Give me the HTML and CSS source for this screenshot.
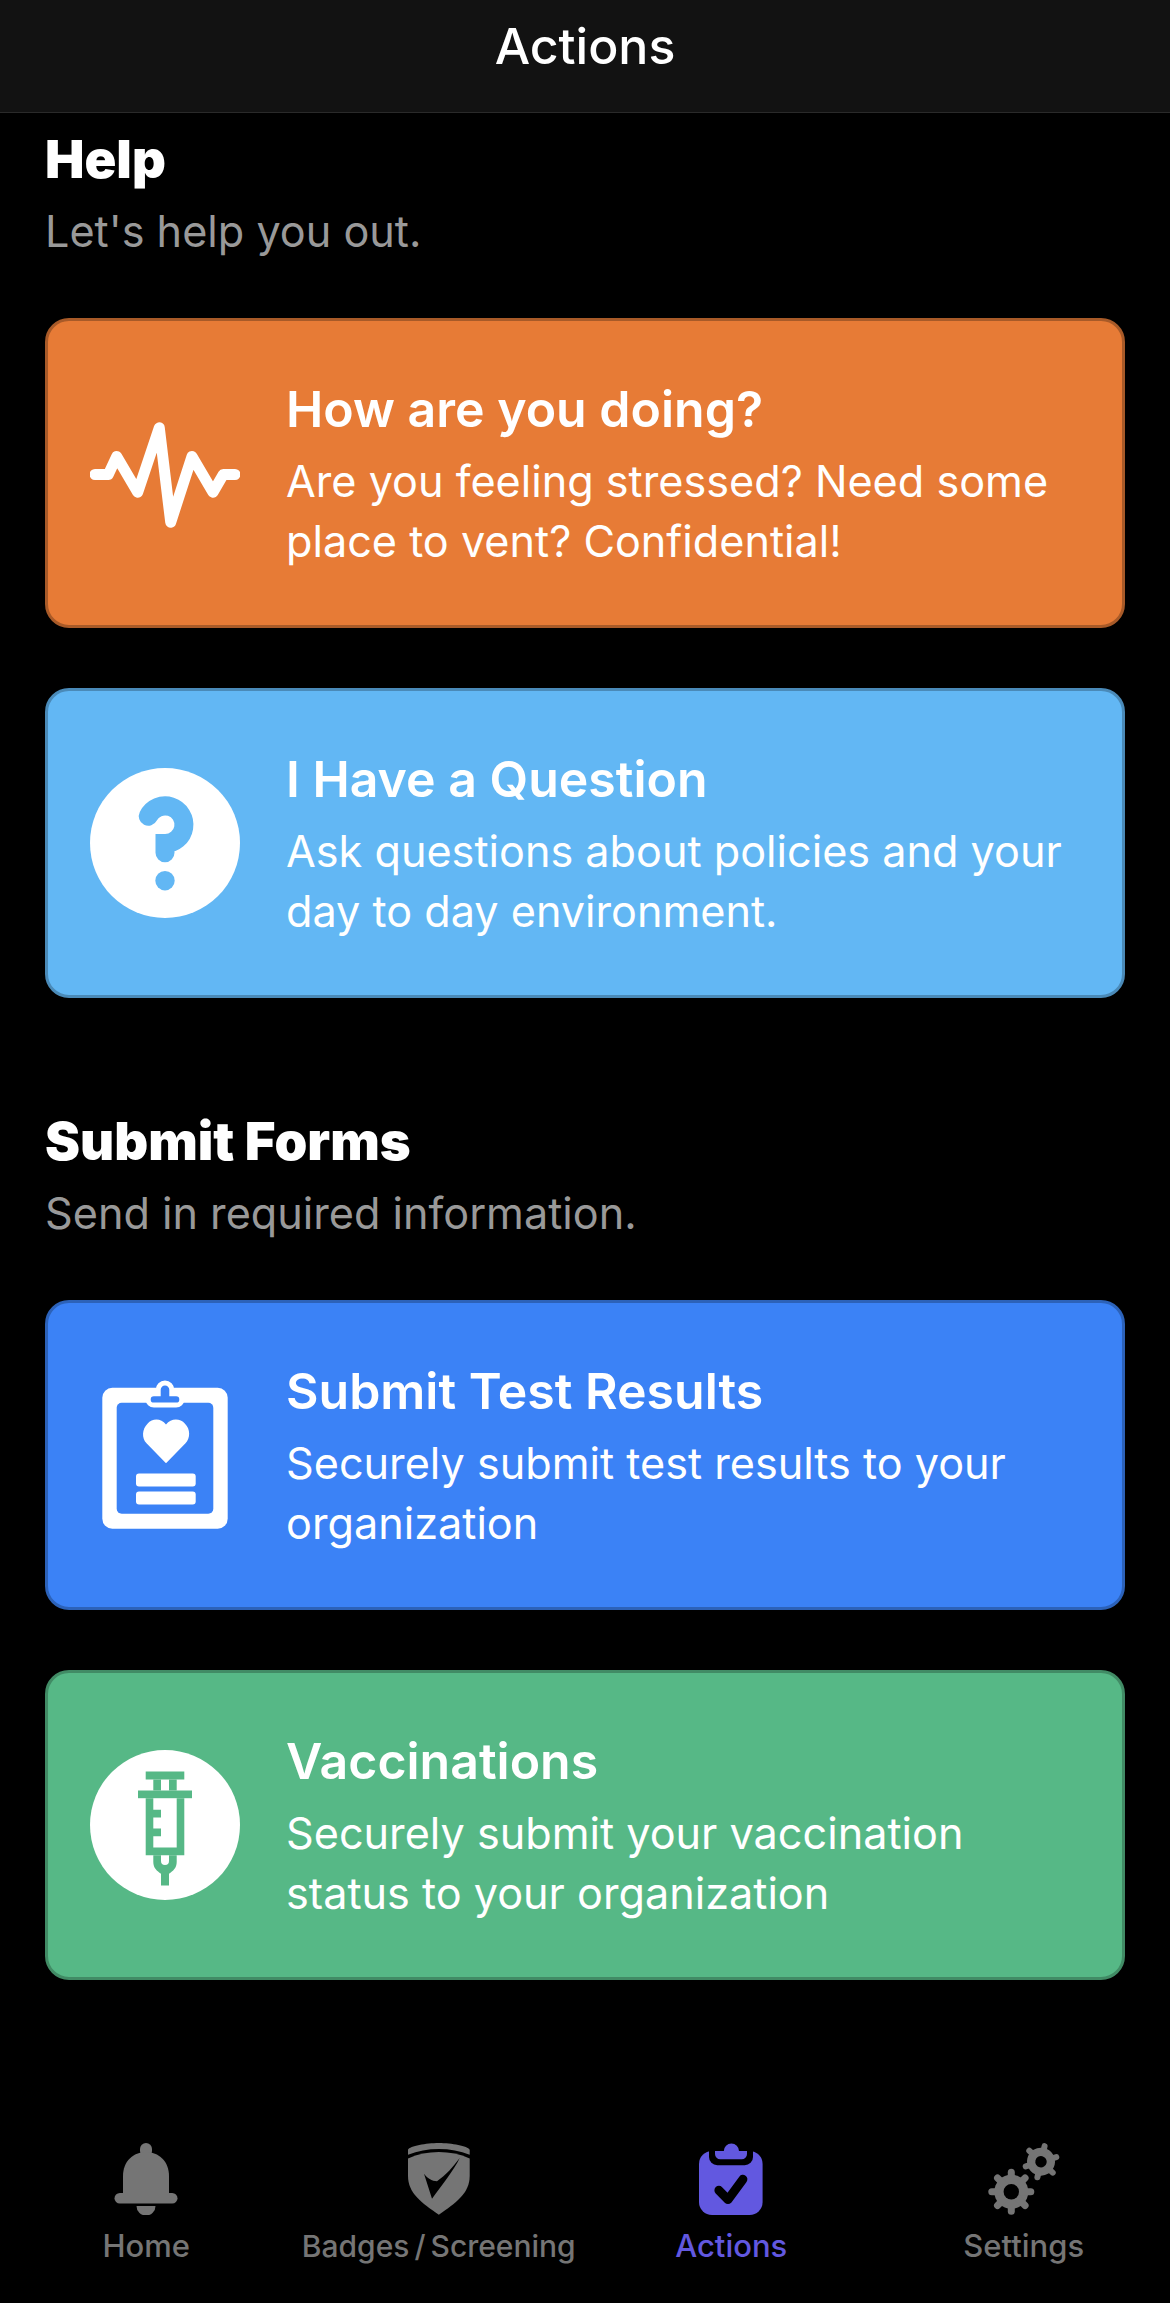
FILE: index.html
```html
<!DOCTYPE html>
<html lang="en">
<head>
	<meta charset="UTF-8">
	<title>Actions</title>
	<link rel="stylesheet" href="styles.css">
</head>
<body>
	<div id="app">
		<header class="topbar">Actions</header>
		<main class="content">
			<section class="group">
				<h2>Help</h2>
				<p class="group-sub">Let's help you out.</p>
				<a class="card orange" href="#">
					<svg class="card-icon" viewBox="0 0 150 150">
						<polyline class="pulse" points="5,76.5 18.3,76.5 26.7,58.5 47.7,94.2 69.3,29.8 80.7,124.2 102,58.5 123,94.2 133.3,76.5 145,76.5"/>
					</svg>
					<div class="card-text">
						<h3>How are you doing?</h3>
						<p>Are you feeling stressed? Need some place to vent? Confidential!</p>
					</div>
				</a>
				<a class="card sky" href="#">
					<svg class="card-icon" viewBox="0 0 150 150">
						<circle class="white" cx="75" cy="75" r="75"/>
						<path class="qmark" d="M58.3 48.3A18.8 18.8 0 1 1 75 75.5V84.7"/>
						<circle class="sky-fill" cx="75" cy="112.7" r="9.7"/>
					</svg>
					<div class="card-text">
						<h3>I Have a Question</h3>
						<p>Ask questions about policies and your day to day environment.</p>
					</div>
				</a>
			</section>
			<section class="group">
				<h2>Submit Forms</h2>
				<p class="group-sub">Send in required information.</p>
				<a class="card blue" href="#">
					<svg class="card-icon" viewBox="0 0 150 150">
						<rect class="white" x="12.3" y="7.8" width="125.4" height="141" rx="10"/>
						<rect class="blue-fill" x="26.7" y="22.8" width="96.6" height="111" rx="5"/>
						<path class="clip" d="M68.2 13.7V9.8a6.8 6.8 0 0 1 13.6 0v3.9h4.3a5.7 5.7 0 0 1 0 11.4H63.9a5.7 5.7 0 0 1 0-11.4z"/>
						<path class="white" d="M76 83.2 56.5 63.3C51.5 58 52 49 57.5 43.7 62.5 38 71 38 76 44.5 81 38 90 38 95 43.7 100.5 49 100.5 58 95.5 63.3Z"/>
						<rect class="white" x="46" y="93.5" width="59.7" height="13" rx="3"/>
						<rect class="white" x="46" y="111.5" width="59.7" height="13" rx="3"/>
					</svg>
					<div class="card-text">
						<h3>Submit Test Results</h3>
						<p>Securely submit test results to your organization</p>
					</div>
				</a>
				<a class="card green" href="#">
					<svg class="card-icon" viewBox="0 0 150 150">
						<circle class="white" cx="75" cy="75" r="75"/>
						<g class="green-fill">
							<rect x="55.7" y="21.5" width="38.6" height="8"/>
							<rect x="63.3" y="29.5" width="7.7" height="11"/>
							<rect x="79" y="29.5" width="7.7" height="11"/>
							<rect x="48" y="40.5" width="54" height="7.7"/>
							<path d="M55.7 48.2H63.3V59.8H71V67.5H63.3V78.5H71V86.2H63.3V97.5H86.7V48.2H94.3V105.2H55.7Z"/>
							<path d="M63.3 105.2H71V111a4 4 0 0 0 8 0V105.2H86.7V112C86.7 118 83 121 79 123.8V135.5H71V123.8C67 121 63.3 118 63.3 112Z"/>
						</g>
					</svg>
					<div class="card-text">
						<h3>Vaccinations</h3>
						<p>Securely submit your vaccination status to your organization</p>
					</div>
				</a>
			</section>
		</main>
		<nav class="tabbar">
			<a class="tab" href="#">
				<svg class="tab-icon" viewBox="0 0 72 72">
					<rect x="30" y="0" width="12" height="14" rx="6"/>
					<path d="M36 9C23.500 9 13 18 13 33V52H59V33C59 18 48.500 9 36 9Z"/>
					<rect x="4.500" y="50" width="63" height="10.600" rx="5.300"/>
					<path d="M26.500 63H45.500A9.500 9.500 0 0 1 26.500 63Z"/>
				</svg>
				<span>Home</span>
			</a>
			<a class="tab" href="#">
				<svg class="tab-icon" viewBox="-5 0 72 72">
					<path d="M0 11.700V6.700C2 3 18 0 30.800 0S59.700 3 61.700 6.700V11.700C52 8 42 6 30.800 6S10 8 0 11.700Z"/>
					<path d="M0 15.500C10 11 20 9 30.800 9S52 11 61.700 15.500V33C61.700 50 48 60 30.800 71.700 13.500 60 0 50 0 33Z"/>
					<path class="cut" d="M16 30.700C19 35 24 38 29 38.300 38 32 45 24 51.700 15 46 27 34 42 24 55.700Z"/>
				</svg>
				<span class="tight">Badges / Screening</span>
			</a>
			<a class="tab active" href="#">
				<svg class="tab-icon" viewBox="-4 0 72 72">
					<rect x="0" y="8" width="63.600" height="64" rx="13"/>
					<path class="cut" d="M10 4H54V14A8.300 8.300 0 0 1 45.700 22.300H18.300A8.300 8.300 0 0 1 10 14Z"/>
					<path d="M16 8H24.800A7.600 7.600 0 0 1 40 8H48V11A5.300 5.300 0 0 1 42.700 16.300H21.300A5.300 5.300 0 0 1 16 11Z"/>
					<polyline class="tick" points="19.900,47.300 29,56.600 43.900,36.300"/>
				</svg>
				<span>Actions</span>
			</a>
			<a class="tab" href="#">
				<svg class="tab-icon" viewBox="0 0 72 72">
					<g class="gear" transform="translate(23.300 48.700)">
						<circle r="17"/>
						<line x1="-19.500" x2="19.500"/>
						<line x1="-19.500" x2="19.500" transform="rotate(45)"/>
						<line x1="-19.500" x2="19.500" transform="rotate(90)"/>
						<line x1="-19.500" x2="19.500" transform="rotate(135)"/>
						<circle class="cut" r="7.700"/>
					</g>
					<g class="gear small" transform="translate(53 18.700) rotate(13)">
						<circle r="14"/>
						<line x1="-16" x2="16" transform="rotate(90)"/>
						<line x1="-16" x2="16" transform="rotate(30)"/>
						<line x1="-16" x2="16" transform="rotate(150)"/>
						<circle class="cut" r="5.700"/>
					</g>
				</svg>
				<span>Settings</span>
			</a>
		</nav>
	</div>
</body>
</html>
```

FILE: styles.css
```css
html, body {
	margin: 0;
	padding: 0;
	background: #000;
}
body {
	font-family: Inter, "Liberation Sans", sans-serif;
	color: #fff;
}
#app {
	display: flex;
	flex-direction: column;
	min-height: 2303px;
}
a {
	text-decoration: none;
	color: inherit;
}

/* top bar */
.topbar {
	height: 112px;
	line-height: 92px;
	background: #121212;
	border-bottom: 1px solid #2a2a2a;
	text-align: center;
	font-size: 50px;
	font-weight: 500;
}

/* sections */
.content {
	flex: 1;
	padding: 0 45px;
}
.group {
	display: flex;
	flex-direction: column;
}
.group + .group {
	margin-top: 97px;
}
.group h2 {
	margin: 13px 0 0;
	font-size: 52.6px;
	line-height: 66px;
	font-weight: 900;
}
.group-sub {
	margin: 9px 0 57px;
	font-size: 43.2px;
	line-height: 60px;
	color: #999;
}

/* cards */
.card {
	display: flex;
	align-items: center;
	box-sizing: border-box;
	height: 310px;
	margin-bottom: 60px;
	padding: 0 42px;
	border: 3px solid;
	border-radius: 24px;
}
.card:last-child {
	margin-bottom: 0;
}
.orange { background: #e77b36; border-color: #a85a28; }
.sky { background: #62b7f4; border-color: #4a8ab8; }
.blue { background: #3b82f6; border-color: #2c62b9; }
.green { background: #56b886; border-color: #418b65; }

.card-icon {
	flex: none;
	width: 150px;
	height: 150px;
	margin-right: 46px;
}
.card-text {
	padding-top: 3px;
}
.card-text h3 {
	margin: 0 0 12px;
	font-size: 50px;
	line-height: 60px;
	font-weight: 600;
}
.card-text p {
	margin: 0;
	font-size: 43.2px;
	line-height: 60px;
}

.white { fill: #fff; }
.sky-fill { fill: #62b7f4; }
.blue-fill { fill: #3b82f6; }
.green-fill { fill: #56b886; }
.pulse {
	fill: none;
	stroke: #fff;
	stroke-width: 11;
	stroke-linecap: round;
	stroke-linejoin: round;
}
.qmark {
	fill: none;
	stroke: #62b7f4;
	stroke-width: 19;
	stroke-linecap: round;
}
.clip {
	fill: #3b82f6;
	stroke: #fff;
	stroke-width: 5;
}

/* tab bar */
.tabbar {
	display: grid;
	grid-template-columns: repeat(4, 1fr);
	height: 160px;
}
.tab {
	display: flex;
	flex-direction: column;
	align-items: center;
	color: #757575;
	font-size: 31px;
	font-weight: 500;
	line-height: 36px;
}
.tab.active {
	color: #6258e0;
}
.tab .tight {
	font-size: 30px;
	word-spacing: -3px;
}
.tab-icon {
	width: 72px;
	height: 72px;
	margin-bottom: 13px;
	fill: currentColor;
}
.tab-icon .cut {
	fill: #000;
}
.tick {
	fill: none;
	stroke: #000;
	stroke-width: 9;
	stroke-linecap: round;
	stroke-linejoin: round;
}
.gear line {
	stroke: currentColor;
	stroke-width: 7;
	stroke-linecap: round;
}
.gear.small line {
	stroke-width: 6;
}
```
